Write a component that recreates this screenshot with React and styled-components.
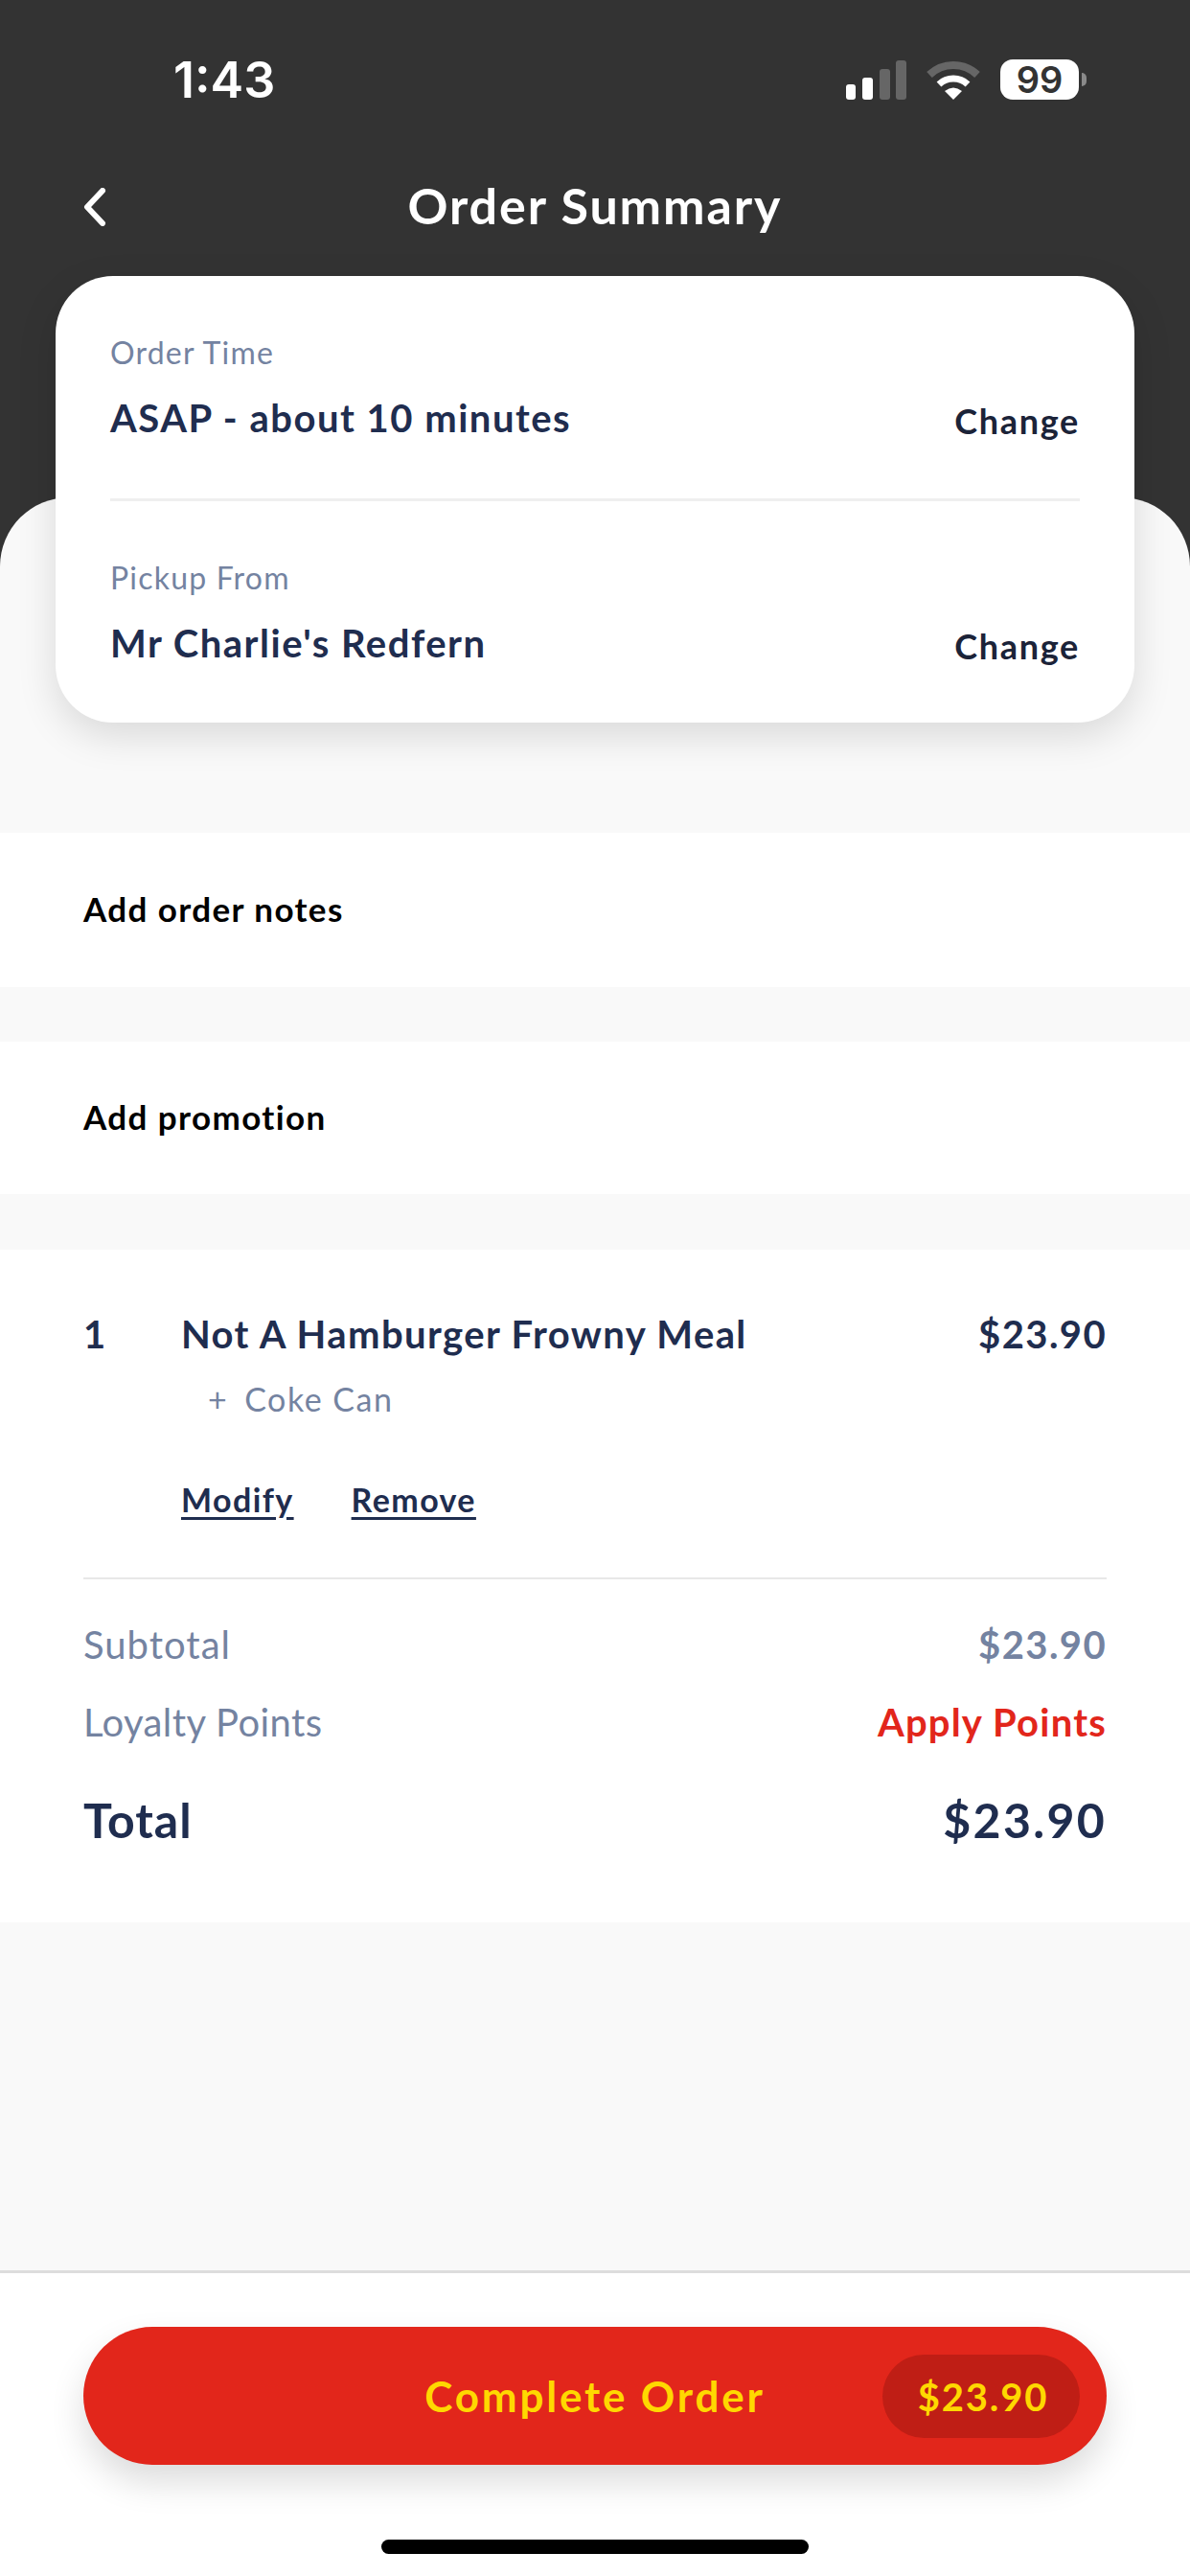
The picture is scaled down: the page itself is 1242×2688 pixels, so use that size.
import React from "react";
import styled, { createGlobalStyle } from "styled-components";

const GlobalStyle = createGlobalStyle`
  html, body {
    margin: 0;
    padding: 0;
    background: #333333;
  }
  * {
    box-sizing: border-box;
  }
`;

const navy = "#1f2d4f";
const slate = "#7483a1";
const red = "#e2261b";

const Page = styled.div`
  width: 1242px;
  height: 2688px;
  display: flex;
  flex-direction: column;
  overflow: hidden;
  background: #333333;
  font-family: "Lato", "Liberation Sans", sans-serif;
`;

// Header Starts Here ...

const Header = styled.header`
  height: 519px;
  flex-shrink: 0;
  color: #ffffff;
`;

const StatusBar = styled.div`
  height: 168px;
  padding: 62px 108px 0 181px;
  display: flex;
  align-items: flex-start;
  justify-content: space-between;
`;

const Clock = styled.span`
  font-family: "Inter", sans-serif;
  font-size: 52px;
  line-height: 44px;
  font-weight: 600;
`;

const StatusIcons = styled.div`
  display: flex;
  align-items: flex-end;
  height: 42px;
`;

const BatteryBody = styled.div`
  width: 82px;
  height: 42px;
  margin-left: 21px;
  border-radius: 13px;
  background: #ffffff;
  color: #333333;
  font-family: "Inter", sans-serif;
  font-size: 38px;
  font-weight: 600;
  line-height: 42px;
  text-align: center;
`;

const BatteryNub = styled.div`
  width: 5px;
  height: 14px;
  margin: 0 0 14px 3px;
  border-radius: 0 5px 5px 0;
  background: #8a8a8a;
`;

const NavBar = styled.div`
  height: 90px;
  padding: 5px 87px 0;
  display: flex;
  align-items: center;
`;

const BackIcon = styled.svg`
  width: 24px;
  height: 40px;
  display: block;
`;

const NavTitle = styled.h1`
  flex: 1;
  margin: -3px 0 0 -24px;
  text-align: center;
  font-size: 52px;
  line-height: 60px;
  font-weight: 700;
  letter-spacing: 1.9px;
`;

// Sheet Starts Here ...

const Sheet = styled.main`
  flex: 1;
  display: flex;
  flex-direction: column;
  background: #f9f9f9;
  border-radius: 72px 72px 0 0;
`;

const InfoCard = styled.section`
  height: 466px;
  margin: -231px 58px 115px;
  padding: 0 57px;
  background: #ffffff;
  border-radius: 60px;
  box-shadow: 0 14px 40px rgba(0, 0, 0, 0.13);
  display: flex;
  flex-direction: column;
`;

const InfoBlock = styled.div`
  height: ${(p) => p.$height}px;
  padding-top: ${(p) => p.$top}px;
  display: flex;
  justify-content: space-between;
  align-items: flex-start;
  border-bottom: ${(p) => (p.$divided ? "3px solid #efefef" : "none")};
`;

const InfoLabel = styled.div`
  color: ${slate};
  font-size: 32px;
  line-height: 40px;
  margin-bottom: 24px;
  letter-spacing: 1.2px;
`;

const InfoValue = styled.div`
  color: ${navy};
  font-size: 40px;
  line-height: 48px;
  font-weight: 700;
  letter-spacing: 1.5px;
`;

const ChangeLink = styled.a`
  color: #1b2338;
  font-size: 36px;
  line-height: 48px;
  font-weight: 700;
  margin-top: 67px;
  letter-spacing: 1.7px;
`;

const ActionRow = styled.div`
  height: ${(p) => p.$height}px;
  margin-bottom: ${(p) => p.$gap}px;
  padding: 0 87px 4px;
  display: flex;
  align-items: center;
  background: #ffffff;
  color: #000000;
  font-size: 35px;
  font-weight: 700;
  letter-spacing: 1.4px;
`;

const OrderPanel = styled.section`
  height: 702px;
  padding: 64px 87px 0;
  background: #ffffff;
`;

const ItemRow = styled.div`
  display: flex;
  align-items: center;
  color: ${navy};
  font-size: 40px;
  line-height: 48px;
  font-weight: 700;
  letter-spacing: 1.4px;
`;

const ItemQty = styled.span`
  width: 102px;
`;

const ItemName = styled.span`
  flex: 1;
`;

const ItemOption = styled.div`
  margin: 24px 0 0 130px;
  display: flex;
  gap: 17px;
  color: ${slate};
  font-size: 34px;
  line-height: 40px;
  letter-spacing: 1.5px;
`;

const ItemLinks = styled.div`
  margin: 63px 0 0 102px;
  display: flex;
  gap: 60px;
`;

const ItemLink = styled.a`
  color: ${navy};
  font-size: 34px;
  line-height: 44px;
  font-weight: 700;
  letter-spacing: 1.4px;
  text-decoration: underline;
  text-underline-offset: 5px;
`;

const PanelDivider = styled.div`
  height: 2px;
  margin-top: 59px;
  background: #e8e8e8;
`;

const SummaryRow = styled.div`
  display: flex;
  justify-content: space-between;
  align-items: center;
  margin-top: ${(p) => p.$top}px;
  height: ${(p) => p.$height}px;
  color: ${(p) => p.$color};
  font-size: ${(p) => p.$size}px;
`;

const SummaryValue = styled.span`
  color: ${(p) => p.$color || "inherit"};
  font-weight: 700;
  letter-spacing: ${(p) => p.$spacing}px;
`;

const SummaryLabel = styled.span`
  font-weight: ${(p) => p.$weight || 400};
  letter-spacing: ${(p) => p.$spacing}px;
`;

// Footer Starts Here ...

const Footer = styled.footer`
  height: 319px;
  flex-shrink: 0;
  padding: 56px 87px 0;
  background: #ffffff;
  border-top: 3px solid #dddddd;
  display: flex;
  flex-direction: column;
`;

const CompleteButton = styled.button`
  height: 144px;
  padding: 0;
  border: none;
  border-radius: 72px;
  background: ${red};
  box-shadow: 0 18px 36px rgba(0, 0, 0, 0.14);
  color: #ffd800;
  font-family: inherit;
  display: flex;
  align-items: center;
  position: relative;
`;

const ButtonLabel = styled.span`
  width: 100%;
  text-align: center;
  font-size: 44px;
  font-weight: 700;
  letter-spacing: 2.8px;
`;

const PriceBadge = styled.span`
  position: absolute;
  top: 29px;
  right: 28px;
  width: 206px;
  height: 87px;
  border-radius: 44px;
  background: #bf1e15;
  display: flex;
  align-items: center;
  justify-content: center;
  padding-left: 4px;
  font-size: 40px;
  font-weight: 700;
  letter-spacing: 1.8px;
`;

const HomeBar = styled.div`
  width: 446px;
  height: 15px;
  margin: 78px auto 0;
  border-radius: 8px;
  background: #000000;
`;

const SignalBars = () => (
  <svg width="63" height="41" viewBox="0 0 63 41">
    <rect x="0" y="25" width="10" height="16" rx="3" fill="#ffffff" />
    <rect x="17" y="18" width="11" height="23" rx="3" fill="#ffffff" />
    <rect x="35" y="9" width="11" height="32" rx="3" fill="#666666" />
    <rect x="52" y="0" width="11" height="41" rx="3" fill="#666666" />
  </svg>
);

const WifiIcon = () => (
  <svg width="56" height="41" viewBox="0 0 56 41" style={{ marginLeft: 21 }}>
    <path d="M3 15 A36 36 0 0 1 53 15" fill="none" stroke="#666666" strokeWidth="8" />
    <path d="M13 25 A22 22 0 0 1 43 25" fill="none" stroke="#ffffff" strokeWidth="7" />
    <path d="M28 41 L19 32 Q28 25 37 32 Z" fill="#ffffff" />
  </svg>
);

const App = () => {
  return (
    <Page>
      <GlobalStyle />
      <Header>
        <StatusBar>
          <Clock>1:43</Clock>
          <StatusIcons>
            <SignalBars />
            <WifiIcon />
            <BatteryBody>99</BatteryBody>
            <BatteryNub />
          </StatusIcons>
        </StatusBar>
        <NavBar>
          <BackIcon viewBox="0 0 24 40">
            <path d="M20 3 L4 20 L20 37" fill="none" stroke="#ffffff" strokeWidth="6" strokeLinecap="round" strokeLinejoin="round" />
          </BackIcon>
          <NavTitle>Order Summary</NavTitle>
        </NavBar>
      </Header>

      <Sheet>
        <InfoCard>
          <InfoBlock $height={235} $top={60} $divided>
            <div>
              <InfoLabel>Order Time</InfoLabel>
              <InfoValue>ASAP - about 10 minutes</InfoValue>
            </div>
            <ChangeLink>Change</ChangeLink>
          </InfoBlock>
          <InfoBlock $height={231} $top={60}>
            <div>
              <InfoLabel>Pickup From</InfoLabel>
              <InfoValue>Mr Charlie's Redfern</InfoValue>
            </div>
            <ChangeLink>Change</ChangeLink>
          </InfoBlock>
        </InfoCard>

        <ActionRow $height={161} $gap={57}>Add order notes</ActionRow>
        <ActionRow $height={159} $gap={58}>Add promotion</ActionRow>

        <OrderPanel>
          <ItemRow>
            <ItemQty>1</ItemQty>
            <ItemName>Not A Hamburger Frowny Meal</ItemName>
            <span>$23.90</span>
          </ItemRow>
          <ItemOption>
            <span>+</span>
            <span>Coke Can</span>
          </ItemOption>
          <ItemLinks>
            <ItemLink>Modify</ItemLink>
            <ItemLink>Remove</ItemLink>
          </ItemLinks>
          <PanelDivider />
          <SummaryRow $top={44} $height={48} $color={slate} $size={40}>
            <SummaryLabel $spacing={1}>Subtotal</SummaryLabel>
            <SummaryValue $spacing={1.4}>$23.90</SummaryValue>
          </SummaryRow>
          <SummaryRow $top={33} $height={48} $color={slate} $size={40}>
            <SummaryLabel $spacing={0.4}>Loyalty Points</SummaryLabel>
            <SummaryValue $color={red} $spacing={1.2}>Apply Points</SummaryValue>
          </SummaryRow>
          <SummaryRow $top={48} $height={60} $color={navy} $size={50}>
            <SummaryLabel $weight={700} $spacing={1}>Total</SummaryLabel>
            <SummaryValue $spacing={2.3}>$23.90</SummaryValue>
          </SummaryRow>
        </OrderPanel>
      </Sheet>

      <Footer>
        <CompleteButton>
          <ButtonLabel>Complete Order</ButtonLabel>
          <PriceBadge>$23.90</PriceBadge>
        </CompleteButton>
        <HomeBar />
      </Footer>
    </Page>
  );
};

export default App;
